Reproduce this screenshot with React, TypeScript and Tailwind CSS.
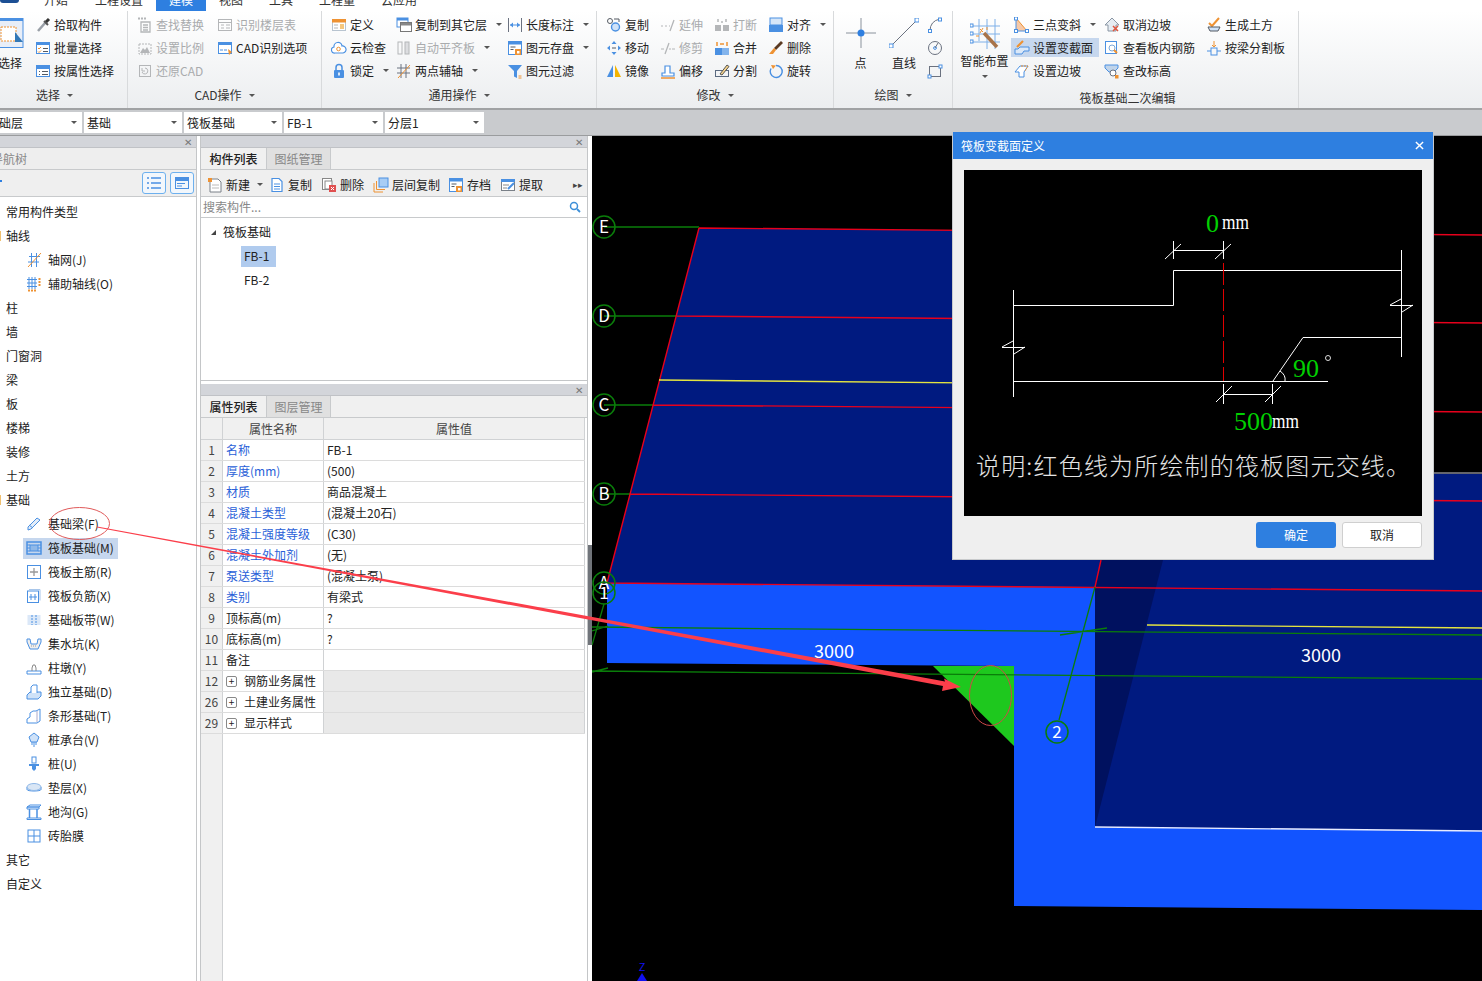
import React from 'react';

const B = '#4a90e2';
const O = '#ee9233';
const G = '#b4b6b8';
const D = '#555b63';

const icons: Record<string, React.ReactNode> = {
  pick: <><path d="M3 14 L10 6" stroke="#9aa0a8" strokeWidth="2.5" /><path d="M9 4 L13 8" stroke="#555" strokeWidth="2" /><path d="M11 5 L14 2" stroke="#333" strokeWidth="3" /></>,
  batch: <><rect x="1.5" y="2.5" width="13" height="11" fill="#fff" stroke={B} /><rect x="1" y="2" width="14" height="3" fill={B} /><path d="M3 8 l1 1 l2 -2 M3 11.5 l1 1 l2 -2" stroke={O} fill="none" /><path d="M8 8.5 h5 M8 11.5 h5" stroke={D} /></>,
  attr: <><rect x="1.5" y="2.5" width="13" height="11" fill="#fff" stroke={B} /><rect x="1" y="2" width="14" height="4" fill={B} /><path d="M4 8.5 h1 M4 11.5 h1 M7 8.5 h6 M7 11.5 h6" stroke={D} /></>,
  find: <><path d="M4 5 h9 v10 h-9 z M6 8 h5 M6 10.5 h5 M6 13 h5" stroke={G} fill="none" strokeWidth="1.3" /><path d="M1 1.5 h9" stroke={G} strokeDasharray="2 1" strokeWidth="2" /></>,
  scale: <><rect x="2" y="4" width="12" height="10" fill="none" stroke={G} strokeDasharray="2 1" /><path d="M3 13 l3 -5 l2 2 l2 -3 l3 6 z" fill={G} /></>,
  restore: <><rect x="2.5" y="2.5" width="11" height="11" fill="none" stroke={G} /><path d="M8 5 a3 3 0 1 1 -3 4 M5 5 v3 h3" stroke={G} fill="none" /></>,
  floor: <><rect x="1.5" y="2.5" width="13" height="11" fill="none" stroke={G} /><path d="M1.5 5.5 h13 M4 8 h3 M4 11 h3 M9 8 h4 M9 11 h4" stroke={G} /></>,
  cad: <><rect x="1.5" y="2.5" width="13" height="11" fill="#fff" stroke={B} /><rect x="1" y="2" width="14" height="3" fill={B} /><path d="M3 10 h3 M7 10 h3" stroke={B} /><path d="M11 9 l4 3 l-3 3 z" fill={O} /></>,
  define: <><rect x="1.5" y="2.5" width="13" height="11" fill="#fff" stroke="#b8c4d0" /><rect x="1" y="2" width="14" height="3.5" fill={O} /><path d="M3 8 h4 M3 11 h4" stroke={G} /><rect x="9" y="7" width="4" height="5" fill="#f5c77e" /></>,
  cloud: <><path d="M4 13 a3 3 0 0 1 -1 -6 a4 4 0 0 1 8 -1 a3.5 3.5 0 0 1 1 7 z" fill="#fff" stroke={B} strokeWidth="1.2" /><circle cx="7.5" cy="9" r="1.8" fill="none" stroke={O} /></>,
  lock: <><rect x="3" y="7" width="10" height="8" rx="1" fill={B} /><path d="M5 7 v-2.5 a3 3 0 0 1 6 0 v2.5" fill="none" stroke={B} strokeWidth="1.5" /><rect x="7.2" y="9.5" width="1.6" height="3" fill="#fff" /></>,
  copyTo: <><rect x="1" y="1" width="11" height="9" fill="#fff" stroke={B} /><rect x="1" y="1" width="11" height="2.5" fill={B} /><rect x="4.5" y="5.5" width="11" height="9" fill="#fff" stroke="#777" /><rect x="5" y="6" width="10" height="2.5" fill="#888" /></>,
  align: <><rect x="2" y="2" width="4" height="12" fill="none" stroke={G} /><rect x="9" y="2" width="4" height="12" fill="#dcdde0" stroke={G} /></>,
  twoPt: <><path d="M1 5 h13 M1 10 h13 M5 1 v14 M10 1 v14" stroke="#6b7280" /><path d="M2 15 L14 2" stroke={O} /></>,
  dim: <><path d="M1.5 1 v14 M14.5 1 v14" stroke="#6b7280" /><path d="M3 8 h10" stroke={B} /><path d="M3 8 l3 -2.5 v5 z M13 8 l-3 -2.5 v5 z" fill={B} /></>,
  save: <><rect x="1.5" y="1.5" width="13" height="13" fill="#fff" stroke={B} /><rect x="1" y="1" width="14" height="3.5" fill={B} /><path d="M3.5 7 h5 M3.5 9.5 h3" stroke={D} /><rect x="8" y="9" width="6" height="6" fill={O} /><rect x="10" y="11" width="2.5" height="2.5" fill="#fff" /></>,
  filter: <><path d="M1 2 h14 l-5 6 v7 l-3 -1.5 v-5.5 z" fill={B} /><path d="M11.5 13 h3 M11.5 15 h3" stroke={O} /></>,
  copy: <><circle cx="4" cy="4" r="2.5" fill="none" stroke={D} /><circle cx="9.5" cy="10" r="4" fill="#cfe2f8" stroke={B} strokeWidth="1.4" /><path d="M8 2 h5 v3" stroke={D} fill="none" /></>,
  extend: <><path d="M1 9 h2 M5 9 h2 M9 9 h1" stroke={G} /><path d="M10 14 L14 3" stroke={G} strokeWidth="1.3" /></>,
  brk: <><rect x="1" y="8" width="6" height="6" fill={G} /><rect x="9" y="8" width="6" height="6" fill={G} /><path d="M4 2 v3 M12 2 v3 M7 5 h2" stroke={G} strokeWidth="1.5" /></>,
  alignR: <><rect x="2" y="1" width="12" height="7" fill="#d6e6f8" stroke={B} /><rect x="1" y="8" width="14" height="7" fill={B} /></>,
  move: <><path d="M8 1 l2.5 3 h-5 z M8 15 l2.5 -3 h-5 z M1 8 l3 -2.5 v5 z M15 8 l-3 -2.5 v5 z" fill={B} /><path d="M6 8 h4" stroke={D} /></>,
  trim: <><path d="M1 9 h3 M9 9 h2 M12 9 h3" stroke={G} /><path d="M5 14 L9 3" stroke={G} strokeWidth="1.3" /></>,
  merge: <><rect x="1" y="8" width="7" height="7" fill={B} /><rect x="8" y="8" width="7" height="7" fill="#83b4ec" /><path d="M3 2 v4 M13 2 v4 M6 4 h4" stroke={O} strokeWidth="1.5" /></>,
  del: <><path d="M13 1 l2 2 l-7 7 l-2 -2 z" fill="#5b3a22" /><path d="M6 8 l2 2 l-3 4 h-4 z" fill={O} /></>,
  mirror: <><path d="M7 2 v12 h-6 z" fill={B} /><path d="M9 2 v12 h6 z" fill="#f5b400" /></>,
  offset: <><path d="M2 13 v-3 h3 v-7 h5 v7 h4 v3 z" fill="#fff" stroke={B} strokeWidth="1.2" /><path d="M1 15 h14" stroke={O} strokeWidth="1.5" /></>,
  split: <><rect x="1.5" y="7.5" width="13" height="6" fill="none" stroke="#5a6a80" /><path d="M6 11 L13 2 l2 1.5 L8 12 z" fill="#f6d38a" stroke="#555" /></>,
  rotate: <><path d="M8 2.5 a6 6 0 1 1 -5 3" fill="none" stroke={B} strokeWidth="1.4" /><path d="M3 2 l5 .5 l-3 3.5 z" fill={O} /></>,
  arc: <><path d="M3 14 Q3 4 13 2" fill="none" stroke="#6b7280" /><rect x="1.5" y="12.5" width="3" height="3" fill="#fff" stroke={B} /><rect x="11.5" y="1" width="3" height="3" fill="#fff" stroke={B} /></>,
  circle: <><circle cx="8" cy="8" r="6.5" fill="none" stroke="#6b7280" /><circle cx="8" cy="8" r="1.4" fill="#fff" stroke={B} /><path d="M8 8 L11 3" stroke="#6b7280" /></>,
  rect: <><rect x="2.5" y="3.5" width="11" height="10" fill="none" stroke="#6b7280" /><rect x="1" y="12" width="3" height="3" fill="#fff" stroke={B} /><rect x="12" y="2" width="3" height="3" fill="#fff" stroke={B} /></>,
  slope3: <><path d="M2 1 v13 h11 z" fill="#f6c9a8" /><path d="M2 1 v13 h11" stroke={B} fill="none" /><path d="M2 1 L13 14" stroke={O} /><rect x="0.5" y="0" width="3" height="3" fill="#fff" stroke={B} /><rect x="0.5" y="12.5" width="3" height="3" fill="#fff" stroke={B} /><rect x="11.5" y="12.5" width="3" height="3" fill="#fff" stroke={B} /></>,
  section: <><path d="M1 14 v-5 h3 l2 -2 h9 v4 h-5 l-2 3 z" fill="#dbe8f8" stroke={B} /><path d="M3 7 L9 1" stroke={O} strokeWidth="2.2" /></>,
  edge: <><path d="M1 9 L6 3 h8 l-4 6 v5 H5 V9 z" fill="#fff" stroke={B} /><path d="M7 3 h7 l-3 5" fill="none" stroke={O} strokeDasharray="2 1" /></>,
  cancel: <><path d="M1 8 L8 1 l7 7 h-3 v6 H4 V8 z" fill="#e6ecf2" stroke="#8a96a4" /><path d="M9 9 l5 5 M14 9 l-5 5" stroke="#e0553d" strokeWidth="1.5" /></>,
  rebar: <><rect x="1.5" y="1.5" width="11" height="12" fill="#fff" stroke={B} /><circle cx="8" cy="8" r="3" fill="none" stroke="#7ba7d8" /><path d="M10 10 l3 3" stroke={O} strokeWidth="2" /></>,
  level: <><path d="M1 2 h13 v3 l-4 4 h-5 l-4 -4 z" fill="#c0d4ea" stroke={B} /><circle cx="9" cy="10" r="3" fill="#fff" stroke="#6b7280" /><rect x="11" y="12" width="3.5" height="3.5" fill={O} /></>,
  earth: <><path d="M3 6 l3 3 l7 -8" fill="none" stroke={O} strokeWidth="2" /><path d="M2 10 h12 l-2 4 h-8 z" fill="#cfe2f8" stroke={D} /></>,
  beamCut: <><path d="M8 1 v6 M6 5 l2 2 l2 -2" stroke={O} fill="none" /><rect x="5" y="8" width="6" height="7" fill="none" stroke={B} /><path d="M1 11 h4 M11 11 h4" stroke={B} /></>,
  grid: <><path d="M3 4.5 h11 M2 10 h11 M5.5 1 v14 M10.5 1 v14" stroke={B} /><path d="M2 15 L15 1" stroke={O} /></>,
  aux: <><path d="M1 3.5 h10 M1 7 h10 M1 10.5 h10 M3 1 v12 M6 1 v12 M9 1 v12" stroke={B} /><path d="M2 14.5 h9 M13.5 2 v9" stroke={O} strokeWidth="2" strokeDasharray="2 1" /></>,
  beam: <><path d="M2 11 L11 2 l3 2 L5 13 l-3 1 z" fill="#e3edf9" stroke={B} /><path d="M3 9 l4 3" stroke={B} /></>,
  raft: <><rect x="1" y="2" width="14" height="12" fill="none" stroke={B} strokeWidth="1.5" /><rect x="4" y="5" width="8" height="6" fill="#8fb8e8" stroke={B} /><path d="M1 5 h3 M1 8 h3 M1 11 h3 M12 5 h3 M12 8 h3 M12 11 h3" stroke={B} /></>,
  main: <><rect x="1.5" y="1.5" width="13" height="13" fill="#fff" stroke={B} /><path d="M8 4 v8 M4 8 h8" stroke="#999" strokeWidth="1.3" /></>,
  neg: <><rect x="1.5" y="3" width="11" height="11.5" fill="#fff" stroke={B} /><path d="M3 1.5 h11 v11" fill="none" stroke="#a8c6ea" /><path d="M5 6 v6 M9 6 v6 M3 9 h8" stroke={B} /></>,
  strip: <><rect x="1.5" y="3" width="13" height="10" fill="#dbe8f8" /><path d="M6 3 v10 M10 3 v10" stroke={B} strokeDasharray="2 1" /></>,
  sump: <><path d="M1 3 h3 l1 5 h6 l1 -5 h3 v3 l-3 7 h-8 l-3 -7 z" fill="#eee" stroke={B} /><path d="M5 10 h6" stroke="#999" strokeDasharray="1 1" /></>,
  pier: <><path d="M1 11 h14 v3 H1 z" fill="#fff" stroke={B} /><path d="M6 11 v-3 l1 -3 h2 l1 3 v3" fill="none" stroke="#888" /></>,
  isolated: <><path d="M1 11 l3 -3 h11 v4 l-3 3 H1 z" fill="#cfe2f8" stroke={B} /><path d="M5 9 V3 l2 -2 h4 v8" fill="#fff" stroke={B} /></>,
  strip2: <><path d="M1 15 v-4 l3 -2 V5 l3 -2 h3 l4 -2 v12 l-3 2 z" fill="#fff" stroke={B} /><path d="M11 3 v11" stroke="#aac" /></>,
  cap: <><path d="M8 1 l5 4 l-2 5 h-6 l-2 -5 z" fill="#cfe2f8" stroke={B} /><path d="M8 10 v5 M6 10 v3 M10 10 v3" stroke={B} /></>,
  pile: <><rect x="6" y="1" width="4" height="6" fill="#fff" stroke={B} /><path d="M3 8 h10 v2 h-3 v3 l-2 2 l-2 -2 v-3 h-3 z" fill={B} /></>,
  pad: <><path d="M1 7 v2.5 c0 2 14 2 14 0 V7" fill="#cfe2f8" stroke={B} /><ellipse cx="8" cy="7" rx="7" ry="3.5" fill="#d9e6f5" stroke="#8fb8e8" /></>,
  trench: <><path d="M1 3 l3 -2 h11 l-2 2 z M1 3 h12 v2 H1 z M1 14 h14 v1.5 H1 z" fill="#fff" stroke={B} /><path d="M3.5 5 v9 M11 5 v9" stroke={B} strokeWidth="1.5" /></>,
  brick: <><rect x="2" y="2" width="12" height="12" fill="#fff" stroke={B} /><path d="M8 2 v12 M2 8 h12" stroke={B} /></>,
  neu: <><path d="M3 2 h8 l3 3 v10 H3 z" fill="#fff" stroke="#7a8088" /><path d="M5 8 h7 M5 11 h7" stroke="#bbb" /><rect x="1" y="1" width="4" height="4" fill={O} /></>,
  dup: <><path d="M3 1.5 h7 l3 3 v10 H3 z" fill="#fff" stroke={B} strokeWidth="1.2" /><path d="M5 7 h6 M5 9.5 h6 M5 12 h6" stroke={B} /></>,
  rm: <><rect x="1.5" y="1.5" width="9" height="11" fill="#fff" stroke="#888" /><rect x="4" y="4" width="7" height="8" fill="#fff" stroke="#888" /><rect x="8" y="8" width="7" height="7" fill="#e05050" /><path d="M10 10 l3 3 M13 10 l-3 3" stroke="#fff" /></>,
  layer: <><path d="M1 6 v9 h9 M3.5 4 v8.5 h8.5" fill="none" stroke={O} /><rect x="6" y="1" width="9" height="9" fill="#a8cdf5" stroke={B} /></>,
  take: <><rect x="1.5" y="2.5" width="13" height="11" fill="#fff" stroke="#7a8088" /><rect x="1" y="2" width="14" height="3" fill={B} /><path d="M3 8 h6 M3 11 h4" stroke="#888" /><path d="M8 12 L14 6" stroke={B} strokeWidth="2" /></>,
};

function Ico({ name, className = 'w-4 h-4' }: { name: string; className?: string }) {
  return (
    <svg viewBox="0 0 16 16" className={`${className} shrink-0`} fill="none">
      {icons[name]}
    </svg>
  );
}

const Caret = ({ className = 'ml-[6px]' }: { className?: string }) => (
  <span className={`inline-block h-0 w-0 border-x-[3px] border-t-[3px] border-x-transparent border-t-[#555] ${className}`} />
);

type ItemProps = { icon: string; label: string; caret?: boolean; off?: boolean; active?: boolean };

const Item = ({ icon, label, caret, off, active }: ItemProps) => (
  <div className="flex h-[23px] items-center">
    <div className={`flex h-[19px] items-center gap-[3px] whitespace-nowrap text-xs ${off ? 'text-[#a9abad]' : 'text-[#222]'} ${active ? '-ml-[3px] w-[88px] bg-[#c6d7ee] pl-[3px]' : ''}`}>
      <Ico name={icon} />
      <span>{label}</span>
      {caret && <Caret />}
    </div>
  </div>
);

const Col = ({ w, items }: { w: string; items: ItemProps[] }) => (
  <div className={`flex shrink-0 flex-col ${w}`}>
    {items.map(it => (
      <Item key={it.label} {...it} />
    ))}
  </div>
);

const Group = ({ w, label, caret = true, labelClass = '', children }: { w: string; label: string; caret?: boolean; labelClass?: string; children: React.ReactNode }) => (
  <div className={`flex shrink-0 flex-col border-r border-[#d8dadc] ${w}`}>
    <div className="flex h-[73px] pt-[2px]">{children}</div>
    <div className={`flex h-[22px] items-center justify-center text-xs text-[#333] ${labelClass}`}>
      {label}
      {caret && <Caret className="ml-[7px]" />}
    </div>
  </div>
);

const Ribbon = () => (
  <div className="flex h-[99px] shrink-0 overflow-hidden border-b-2 border-[#a0a2a4] bg-gradient-to-b from-white to-[#eceef0]">
    <Group w="w-[128px]" label="选择" labelClass="pr-[18px]">
      <div className="flex w-[35px] shrink-0 flex-col">
        <svg viewBox="0 0 24 30" className="mt-[5px] h-[30px] w-[24px] shrink-0">
          <rect x="-3" y="0.5" width="26" height="29" fill="#e8eef8" stroke={B} />
          <rect x="-3" y="0" width="26" height="3" fill={B} />
          <rect x="1" y="9" width="15" height="14" fill="#fff" stroke={O} strokeDasharray="2 1" />
          <path d="M15 14 L23 24 H15 Z" fill="#3178b8" />
        </svg>
        <span className="-ml-[2px] mt-[7px] text-xs text-[#222]">选择</span>
      </div>
      <Col w="w-[90px]" items={[{ icon: 'pick', label: '拾取构件' }, { icon: 'batch', label: '批量选择' }, { icon: 'attr', label: '按属性选择' }]} />
    </Group>
    <Group w="w-[194px]" label="CAD操作">
      <div className="w-[9px]" />
      <Col w="w-[80px]" items={[{ icon: 'find', label: '查找替换', off: true }, { icon: 'scale', label: '设置比例', off: true }, { icon: 'restore', label: '还原CAD', off: true }]} />
      <Col w="w-[100px]" items={[{ icon: 'floor', label: '识别楼层表', off: true }, { icon: 'cad', label: 'CAD识别选项' }]} />
    </Group>
    <Group w="w-[275px]" label="通用操作">
      <div className="w-[9px]" />
      <Col w="w-[65px]" items={[{ icon: 'define', label: '定义' }, { icon: 'cloud', label: '云检查' }, { icon: 'lock', label: '锁定', caret: true }]} />
      <Col w="w-[111px]" items={[{ icon: 'copyTo', label: '复制到其它层', caret: true }, { icon: 'align', label: '自动平齐板', caret: true, off: true }, { icon: 'twoPt', label: '两点辅轴', caret: true }]} />
      <Col w="w-[85px]" items={[{ icon: 'dim', label: '长度标注', caret: true }, { icon: 'save', label: '图元存盘', caret: true }, { icon: 'filter', label: '图元过滤' }]} />
    </Group>
    <Group w="w-[237px]" label="修改">
      <div className="w-[9px]" />
      <Col w="w-[54px]" items={[{ icon: 'copy', label: '复制' }, { icon: 'move', label: '移动' }, { icon: 'mirror', label: '镜像' }]} />
      <Col w="w-[54px]" items={[{ icon: 'extend', label: '延伸', off: true }, { icon: 'trim', label: '修剪', off: true }, { icon: 'offset', label: '偏移' }]} />
      <Col w="w-[54px]" items={[{ icon: 'brk', label: '打断', off: true }, { icon: 'merge', label: '合并' }, { icon: 'split', label: '分割' }]} />
      <Col w="w-[60px]" items={[{ icon: 'alignR', label: '对齐', caret: true }, { icon: 'del', label: '删除' }, { icon: 'rotate', label: '旋转' }]} />
    </Group>
    <Group w="w-[119px]" label="绘图">
      <div className="flex w-[53px] shrink-0 flex-col items-center">
        <svg viewBox="0 0 30 30" className="mt-[5px] h-[30px] w-[30px]">
          <path d="M15 0 V30 M0 15 H30" stroke="#8a929c" />
          <circle cx="15" cy="15" r="3.5" fill="#2f7fe0" />
        </svg>
        <span className="mt-[7px] text-xs text-[#222]">点</span>
      </div>
      <div className="flex w-[34px] shrink-0 flex-col items-center">
        <svg viewBox="0 0 30 30" className="mt-[5px] h-[30px] w-[30px]">
          <path d="M1 29 L29 1" stroke="#6b7280" />
          <rect x="0" y="26" width="4" height="4" fill="#fff" stroke={B} />
          <rect x="26" y="0" width="4" height="4" fill="#fff" stroke={B} />
        </svg>
        <span className="mt-[7px] text-xs text-[#222]">直线</span>
      </div>
      <div className="flex flex-col pl-[6px]">
        {['arc', 'circle', 'rect'].map(n => (
          <div key={n} className="flex h-[23px] items-center">
            <Ico name={n} />
          </div>
        ))}
      </div>
    </Group>
    <Group w="w-[346px]" label="筏板基础二次编辑" caret={false} labelClass="pl-[4px] pt-[5px]">
      <div className="flex w-[61px] shrink-0 flex-col items-center pl-[2px]">
        <svg viewBox="0 0 30 30" className="mt-[6px] h-[30px] w-[30px]">
          <path d="M2 7 H30 M2 15 H30 M2 23 H30 M9 0 V22 M17 0 V30 M25 0 V30" stroke="#7fb0e8" />
          <rect x="0" y="5" width="3" height="3" fill="#fff" stroke={B} />
          <rect x="0" y="13" width="3" height="3" fill="#fff" stroke={B} />
          <rect x="0" y="21" width="3" height="3" fill="#fff" stroke={B} />
          <path d="M14 14 L27 28" stroke="#a8744a" strokeWidth="3.5" />
          <path d="M10 10 l3 3 M13 9 l-3 5 M17 8 v3 M6 17 h3" stroke={O} />
        </svg>
        <span className="mt-[4px] text-xs text-[#222]">智能布置</span>
        <Caret className="mt-[6px]" />
      </div>
      <Col w="w-[90px]" items={[{ icon: 'slope3', label: '三点变斜', caret: true }, { icon: 'section', label: '设置变截面', active: true }, { icon: 'edge', label: '设置边坡' }]} />
      <Col w="w-[102px]" items={[{ icon: 'cancel', label: '取消边坡' }, { icon: 'rebar', label: '查看板内钢筋' }, { icon: 'level', label: '查改标高' }]} />
      <Col w="w-[85px]" items={[{ icon: 'earth', label: '生成土方' }, { icon: 'beamCut', label: '按梁分割板' }]} />
    </Group>
  </div>
);

const tabs = [
  { t: '开始', w: 'w-[95px]', pl: 'pl-[44px]' },
  { t: '工程设置', w: 'w-[61px]', pl: '' },
  { t: '建模', w: 'w-[50px]', pl: '', on: true },
  { t: '视图', w: 'w-[50px]', pl: 'pl-[13px]' },
  { t: '工具', w: 'w-[50px]', pl: 'pl-[13px]' },
  { t: '工程量', w: 'w-[62px]', pl: 'pl-[13px]' },
  { t: '云应用', w: 'w-[60px]', pl: 'pl-[13px]' },
];

const TopTabs = () => (
  <div className="relative flex h-[11px] shrink-0 overflow-hidden bg-white text-xs text-[#333]">
    <div className="absolute left-0 top-0 h-[3px] w-[19px] rounded-b-sm bg-[#1c4f94]" />
    {tabs.map(t => (
      <div key={t.t} className={`${t.w} ${t.pl} shrink-0 ${t.on ? 'bg-[#2e7fe0] text-center text-white' : ''}`}>
        <div className="-mt-[8px] leading-[16px]">{t.t}</div>
      </div>
    ))}
  </div>
);

const combos = [
  { t: '础层', w: 'w-[83px]', x: '-ml-px' },
  { t: '基础', w: 'w-[98px]', x: 'pl-[3px]' },
  { t: '筏板基础', w: 'w-[98px]', x: 'pl-[3px]' },
  { t: 'FB-1', w: 'w-[99px]', x: 'pl-[3px]' },
  { t: '分层1', w: 'w-[99px]', x: 'pl-[3px]' },
];

const Toolbar = () => (
  <div className="flex h-[26px] shrink-0 items-center gap-[2px] border-b border-[#9a9c9e] bg-[#c9cbce]">
    {combos.map(c => (
      <div key={c.t} className={`flex h-[21px] items-center justify-between bg-white pr-[5px] text-xs text-[#222] ${c.w} ${c.x}`}>
        <span>{c.t}</span>
        <Caret className="" />
      </div>
    ))}
  </div>
);

const PanelHead = () => (
  <div className="flex h-[12px] shrink-0 items-center justify-end border-b border-[#c0c2c6] bg-[#d3d5da] pr-[4px] text-[10px] leading-none text-[#777]">✕</div>
);

const tree1 = ['常用构件类型', '轴线'];
const sub1 = [
  { i: 'grid', t: '轴网(J)' },
  { i: 'aux', t: '辅助轴线(O)' },
];
const tree2 = ['柱', '墙', '门窗洞', '梁', '板', '楼梯', '装修', '土方', '基础'];
const sub2 = [
  { i: 'beam', t: '基础梁(F)' },
  { i: 'raft', t: '筏板基础(M)', on: true },
  { i: 'main', t: '筏板主筋(R)' },
  { i: 'neg', t: '筏板负筋(X)' },
  { i: 'strip', t: '基础板带(W)' },
  { i: 'sump', t: '集水坑(K)' },
  { i: 'pier', t: '柱墩(Y)' },
  { i: 'isolated', t: '独立基础(D)' },
  { i: 'strip2', t: '条形基础(T)' },
  { i: 'cap', t: '桩承台(V)' },
  { i: 'pile', t: '桩(U)' },
  { i: 'pad', t: '垫层(X)' },
  { i: 'trench', t: '地沟(G)' },
  { i: 'brick', t: '砖胎膜' },
];

const Top = ({ t }: { t: string }) => (
  <div className="relative flex h-6 items-center pl-[6px] text-xs text-[#222]">
    {(t === '轴线' || t === '基础') && <span className="absolute left-0 top-[7px] h-[10px] w-px bg-[#f0c070]" />}
    {t}
  </div>
);

const Sub = ({ i, t, on }: { i: string; t: string; on?: boolean }) => (
  <div className="flex h-6 items-center">
    <div className={`ml-[23px] flex h-[21px] items-center gap-[6px] pl-[3px] pr-[4px] text-xs text-[#222] ${on ? 'bg-[#c6d7ee]' : ''}`}>
      <Ico name={i} />
      <span>{t}</span>
    </div>
  </div>
);

const ToolSquare = ({ kind }: { kind: 'list' | 'win' }) => (
  <div className="flex h-[22px] w-[24px] items-center justify-center rounded-[3px] border border-[#6db0ee] bg-[#f2f7fc]">
    <svg viewBox="0 0 16 16" className="h-4 w-4" fill="none">
      {kind === 'list' ? (
        <path d="M1 3 h2 M1 8 h2 M1 13 h2 M5 3 h10 M5 8 h10 M5 13 h10" stroke={B} strokeWidth="1.5" />
      ) : (
        <>
          <rect x="1.5" y="2.5" width="13" height="11" stroke={B} />
          <rect x="1" y="2" width="14" height="4" fill={B} />
          <path d="M3 8.5 h8 M3 11 h5" stroke={B} />
        </>
      )}
    </svg>
  </div>
);

const LeftPanel = () => (
  <div className="flex w-[200px] shrink-0 bg-white">
    <div className="flex w-[197px] flex-col border-r border-[#c4c6c8]">
      <PanelHead />
      <div className="flex h-[22px] shrink-0 items-center overflow-hidden border-b border-[#c8cacc] bg-[#eeeeee] text-xs text-[#888]">
        <span className="-ml-[9px]">导航树</span>
      </div>
      <div className="relative flex h-[27px] shrink-0 items-center justify-end gap-[4px] border-b border-[#c8cacc] bg-[#efefef] pr-[2px]">
        <span className="absolute left-0 top-[10px] h-[2px] w-[2px] bg-[#2e7fe0]" />
        <ToolSquare kind="list" />
        <ToolSquare kind="win" />
      </div>
      <div className="flex flex-col pt-[3px]">
        {tree1.map(t => (
          <Top key={t} t={t} />
        ))}
        {sub1.map(s => (
          <Sub key={s.t} {...s} />
        ))}
        {tree2.map(t => (
          <Top key={t} t={t} />
        ))}
        {sub2.map(s => (
          <Sub key={s.t} {...s} />
        ))}
        <Top t="其它" />
        <Top t="自定义" />
      </div>
    </div>
  </div>
);

const PanelTabs = ({ a, b }: { a: string; b: string }) => (
  <div className="flex h-[22px] shrink-0 border-b border-[#c8cacc] bg-[#f0f0f0] text-xs">
    <div className="flex w-[65px] items-center justify-center font-medium text-[#222]">{a}</div>
    <div className="flex w-[65px] items-center justify-center border-x border-[#c8cacc] bg-[#e0e0e0] text-[#888]">{b}</div>
  </div>
);

const listTools = [
  { i: 'neu', t: '新建', w: 'w-[62px]', caret: true },
  { i: 'dup', t: '复制', w: 'w-[52px]' },
  { i: 'rm', t: '删除', w: 'w-[52px]' },
  { i: 'layer', t: '层间复制', w: 'w-[75px]' },
  { i: 'save', t: '存档', w: 'w-[52px]' },
  { i: 'take', t: '提取', w: 'w-[60px]' },
];

const ListPanel = () => (
  <div className="flex h-[245px] shrink-0 flex-col border-b border-[#c4c6c8]">
    <PanelHead />
    <PanelTabs a="构件列表" b="图纸管理" />
    <div className="flex h-[27px] shrink-0 items-center border-b border-[#c8cacc] bg-[#efefef] pl-[6px] pt-[3px] text-xs text-[#222]">
      {listTools.map(t => (
        <div key={t.t} className={`flex items-center gap-[3px] ${t.w}`}>
          <Ico name={t.i} />
          <span>{t.t}</span>
          {t.caret && <Caret className="ml-[4px]" />}
        </div>
      ))}
      <span className="ml-auto pr-[4px] text-[9px] text-[#444]">▸▸</span>
    </div>
    <div className="flex h-[21px] shrink-0 items-center justify-between border-b border-[#c8cacc] pl-[2px] pr-[6px] text-xs text-[#888]">
      <span>搜索构件...</span>
      <svg viewBox="0 0 12 12" className="h-3 w-3" fill="none">
        <circle cx="5" cy="5" r="3.5" stroke="#3d8fd8" strokeWidth="1.5" />
        <path d="M8 8 l3 3" stroke="#3d8fd8" strokeWidth="1.8" />
      </svg>
    </div>
    <div className="flex flex-col pt-[2px] text-xs text-[#222]">
      <div className="flex h-6 items-center gap-[7px] pl-[10px]">
        <span className="inline-block h-0 w-0 border-b-[5px] border-l-[5px] border-b-[#444] border-l-transparent" />
        <span>筏板基础</span>
      </div>
      <div className="ml-[40px] flex h-6 items-center">
        <span className="flex h-[21px] w-[35px] items-center bg-[#b0cbee] pl-[3px]">FB-1</span>
      </div>
      <div className="ml-[43px] flex h-6 items-center">FB-2</div>
    </div>
  </div>
);

const rows = [
  { n: '1', k: '名称', v: 'FB-1', blue: true },
  { n: '2', k: '厚度(mm)', v: '(500)', blue: true },
  { n: '3', k: '材质', v: '商品混凝土', blue: true },
  { n: '4', k: '混凝土类型', v: '(混凝土20石)', blue: true },
  { n: '5', k: '混凝土强度等级', v: '(C30)', blue: true },
  { n: '6', k: '混凝土外加剂', v: '(无)', blue: true },
  { n: '7', k: '泵送类型', v: '(混凝土泵)', blue: true },
  { n: '8', k: '类别', v: '有梁式', blue: true },
  { n: '9', k: '顶标高(m)', v: '?' },
  { n: '10', k: '底标高(m)', v: '?' },
  { n: '11', k: '备注', v: '' },
  { n: '12', k: '钢筋业务属性', v: '', group: true },
  { n: '26', k: '土建业务属性', v: '', group: true },
  { n: '29', k: '显示样式', v: '', group: true },
];

const PropPanel = () => (
  <div className="flex flex-1 flex-col">
    <PanelHead />
    <PanelTabs a="属性列表" b="图层管理" />
    <div className="flex flex-1">
      <div className="flex w-[384px] flex-col text-xs text-[#222]">
        <div className="flex h-[22px] shrink-0 border-b border-[#d0d2d4] bg-[#f0f0f0] text-[#444]">
          <div className="w-[22px] border-r border-[#d0d2d4]" />
          <div className="flex w-[101px] items-center justify-center border-r border-[#d0d2d4]">属性名称</div>
          <div className="flex flex-1 items-center justify-center border-r border-[#d0d2d4]">属性值</div>
        </div>
        {rows.map(r => (
          <div key={r.n} className="flex h-[21px] shrink-0 border-b border-[#dcdcdc]">
            <div className="flex w-[22px] items-center justify-center border-r border-[#d0d2d4] bg-[#f0f0f0] text-[#444]">{r.n}</div>
            <div className={`flex w-[101px] items-center border-r border-[#d0d2d4] pl-[3px] ${r.blue ? 'text-[#2a5fd8]' : ''}`}>
              {r.group && (
                <span className="mr-[7px] flex h-[11px] w-[11px] items-center justify-center rounded-[2px] border border-[#888] text-[10px] leading-none">+</span>
              )}
              {r.k}
            </div>
            <div className={`flex flex-1 items-center border-r border-[#d0d2d4] pl-[3px] ${r.group ? 'bg-[#e9e9e9]' : ''}`}>{r.v}</div>
          </div>
        ))}
        <div className="flex-1">
          <div className="h-full w-[22px] border-r border-[#d0d2d4] bg-[#f0f0f0]" />
        </div>
      </div>
    </div>
  </div>
);

const MidPanel = () => (
  <div className="flex w-[392px] shrink-0 bg-white">
    <div className="flex w-[388px] flex-col border-x border-[#c4c6c8]">
      <ListPanel />
      <div className="h-[3px] shrink-0 bg-white" />
      <PropPanel />
    </div>
    <div className="flex w-1 items-start bg-white pt-[409px]">
      <div className="h-[100px] w-1 bg-[#70747a]" />
    </div>
  </div>
);

const Axis = ({ x, y, t }: { x: number; y: number; t: string }) => (
  <>
    <circle cx={x} cy={y} r="11" fill="none" stroke="#0a7d0a" strokeWidth="1.5" />
    <text x={x} y={y + 6} textAnchor="middle" fontSize="17" fill="#fff">
      {t}
    </text>
  </>
);

const Canvas = () => (
  <div className="flex-1 bg-black">
    <svg viewBox="592 136 890 845" className="block h-[845px] w-[890px]">
      <polygon points="699,228 1300,233 1300,473 1482,474 1482,832 1095,827 1095,587 607,583" fill="#001a80" />
      <polygon points="1101,560 1163,560 1095,827 1095,587" fill="#00115f" />
      <polygon points="607,583 1095,587 1095,827 1482,831 1482,910 1014,906 1014,666 607,663" fill="#1254ff" />
      <polygon points="933,666 1014,666 1014,746" fill="#1ec81e" />
      <path d="M604,227 H699 M604,316 H677 M604,405 H653 M604,494 H630" stroke="#0a7d0a" strokeWidth="1.3" />
      <path d="M699,228 L1482,235 M677,316 L1482,323 M653,405 L1482,412 M630,494 L1482,501 M607,583 L1482,591 M699,228 L607,583 M1095,587 L1101,560" stroke="#e8001c" strokeWidth="1.4" fill="none" />
      <path d="M659,380 L1300,386 M1147,625 L1482,628" stroke="#e4e440" strokeWidth="1.4" />
      <path d="M1095,827 L1482,831" stroke="#e8ecff" strokeWidth="1.4" />
      <path d="M1434,473 H1482" stroke="#c8c8d0" strokeWidth="1.2" />
      <path d="M592,627 L1482,635 M592,671 L1482,679 M592,631 L608,626 M592,672 L608,668 M1060,635 L1107,628 M1095,587 L1059,720 M604,604 L592,645" stroke="#0a7d0a" strokeWidth="1.3" fill="none" />
      <Axis x={604} y={227} t="E" />
      <Axis x={604} y={316} t="D" />
      <Axis x={604} y={405} t="C" />
      <Axis x={604} y={494} t="B" />
      <Axis x={604} y={583} t="A" />
      <Axis x={604} y={593} t="1" />
      <Axis x={1057} y={732} t="2" />
      <text x={834} y={658} textAnchor="middle" fontSize="18" fill="#fff">3000</text>
      <text x={1321} y={662} textAnchor="middle" fontSize="18" fill="#fff">3000</text>
      <text x={642} y={971} textAnchor="middle" fontSize="11" fill="#1010f0">Z</text>
      <polygon points="642,973 637,981 647,981" fill="#1010f0" />
    </svg>
  </div>
);

const Diagram = () => (
  <svg viewBox="964 170 458 346" className="block h-[346px] w-[458px] bg-black">
    <g stroke="#fff" fill="none" strokeWidth="1">
      <path d="M1013.5,290 V397 M1013,305.5 H1173.5 V270.5 H1401 M1401.5,250 V357 M1303,337.5 H1401 M1303,337.5 L1273,381 M1013,381.5 H1328" />
      <path d="M1173,250.5 H1223 M1173.5,241 V259 M1223.5,241 V259 M1165,259 L1181,244 M1215,259 L1231,244" />
      <path d="M1223,394.5 H1272 M1223.5,384 V404 M1272.5,384 V404 M1216,402 L1232,386 M1265,402 L1281,386" />
      <path d="M1002,347.5 H1025 M1002,347 L1013,341 M1025,347 L1014,354 M1390,305.5 H1413 M1390,305 L1401,299 M1413,305 L1402,312" />
      <path d="M1280,371 Q1286,375 1285,381" />
      <circle cx="1328" cy="358" r="2.5" stroke="#ddd" />
    </g>
    <path d="M1223.5,263 V381" stroke="#e00000" strokeDasharray="22 4" />
    <g className="font-['Liberation_Serif',serif]">
      <text x="1206" y="232" fontSize="26" fill="#00d000">0</text>
      <text x="1222" y="229" fontSize="20" fill="#fff" textLength="27" lengthAdjust="spacingAndGlyphs">mm</text>
      <text x="1293" y="377" fontSize="26" fill="#00d000">90</text>
      <text x="1234" y="430" fontSize="26" fill="#00d000">500</text>
      <text x="1272" y="428" fontSize="20" fill="#fff" textLength="27" lengthAdjust="spacingAndGlyphs">mm</text>
    </g>
    <text x="976" y="475" fontSize="24" fill="#e4e4e4" textLength="434" className="font-['Noto_Sans_CJK_SC',serif] font-light">说明:红色线为所绘制的筏板图元交线。</text>
  </svg>
);

const Dialog = () => (
  <div className="absolute left-[952px] top-[132px] flex h-[428px] w-[482px] flex-col border-x border-b border-[#c8cacc] bg-[#efefef]">
    <div className="flex h-[27px] shrink-0 items-center justify-between bg-[#2e7fe0] pl-[8px] pr-[9px] text-xs text-white">
      <span>筏板变截面定义</span>
      <svg viewBox="0 0 10 10" className="h-[9px] w-[9px]" fill="none">
        <path d="M1 1 L9 9 M9 1 L1 9" stroke="#fff" strokeWidth="1.6" />
      </svg>
    </div>
    <div className="px-[11px] pt-[11px]">
      <Diagram />
    </div>
    <div className="flex justify-end gap-[6px] pr-[11px] pt-[6px] text-xs">
      <div className="flex h-[26px] w-[80px] items-center justify-center rounded-[3px] bg-[#2e7fe0] text-white">确定</div>
      <div className="flex h-[26px] w-[80px] items-center justify-center rounded-[3px] border border-[#cfcfcf] bg-white text-[#222]">取消</div>
    </div>
  </div>
);

const Markup = () => (
  <svg viewBox="0 0 1482 981" className="pointer-events-none absolute inset-0 h-[981px] w-[1482px]" fill="none">
    <ellipse cx="79.5" cy="523.5" rx="30" ry="16" stroke="#e05a5a" />
    <ellipse cx="990.5" cy="695.5" rx="21" ry="30" stroke="#d04848" />
    <polygon points="97,526.5 945,681.5 944,678.5 961,687 942,691 943,686 97,527.5" fill="#fb3e4a" />
  </svg>
);

export default function App() {
  return (
    <div className="relative flex h-[981px] w-[1482px] flex-col overflow-hidden bg-white font-['Noto_Sans_CJK_SC','Noto_Sans',sans-serif]">
      <TopTabs />
      <Ribbon />
      <Toolbar />
      <div className="flex flex-1">
        <LeftPanel />
        <MidPanel />
        <Canvas />
      </div>
      <Dialog />
      <Markup />
    </div>
  );
}
